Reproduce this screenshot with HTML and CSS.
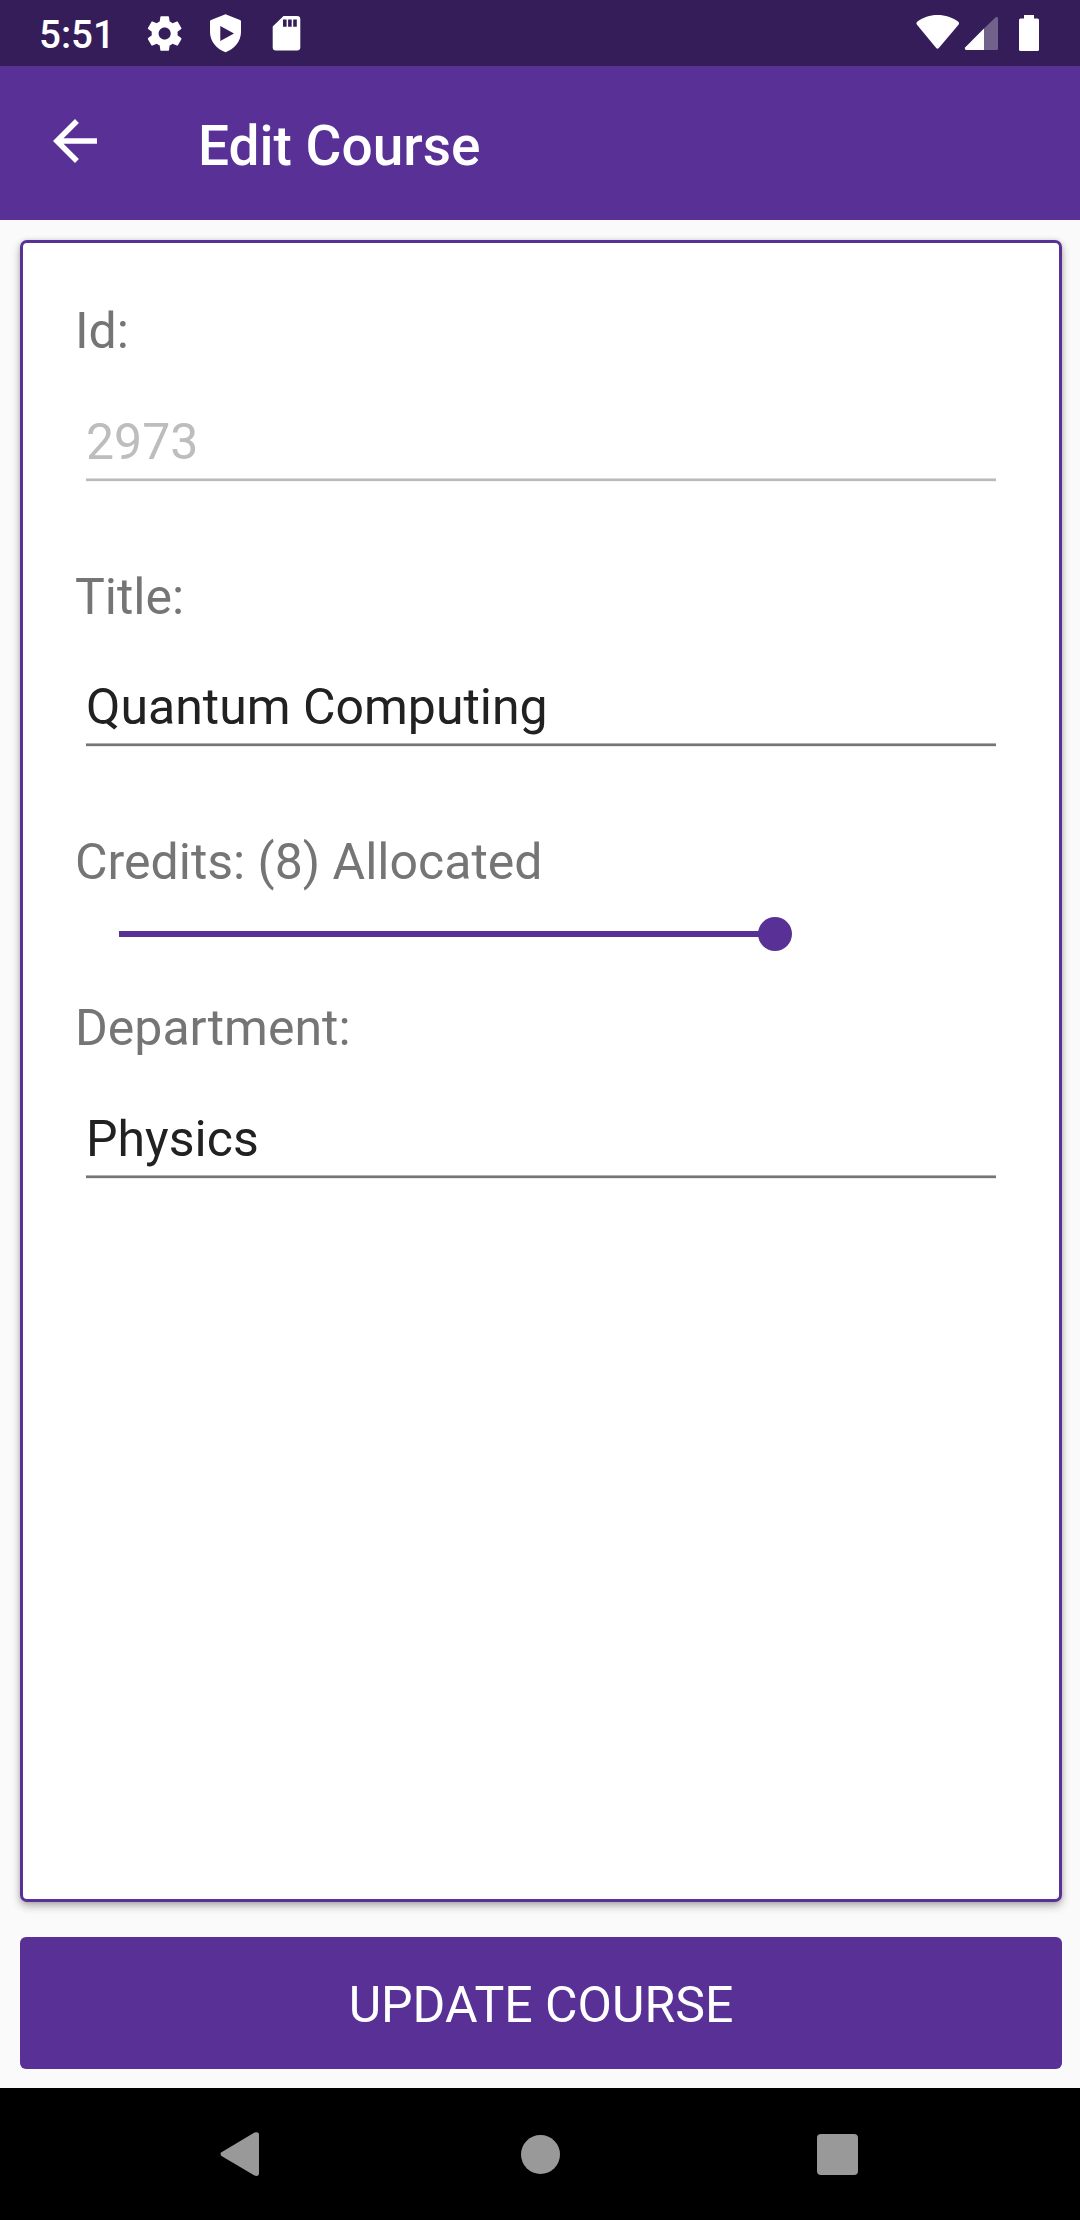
FILE: index.html
```html
<!DOCTYPE html>
<html lang="en">
<head>
<meta charset="utf-8">
<title>Edit Course</title>
<link rel="stylesheet" href="styles.css">
</head>
<body>
<div class="screen">
  <div class="status-bar">
    <span class="clock">5:51</span>
    <svg class="status-left" width="160" height="66" viewBox="144 0 160 66" fill="#fff">
      <path transform="translate(143.9 12.8) scale(1.73)" d="M19.43 12.98c.04-.32.07-.64.07-.98s-.03-.66-.07-.98l2.11-1.65c.19-.15.24-.42.12-.64l-2-3.46c-.12-.22-.39-.3-.61-.22l-2.49 1c-.52-.4-1.08-.73-1.69-.98l-.38-2.65C14.46 2.18 14.25 2 14 2h-4c-.25 0-.46.18-.49.42l-.38 2.65c-.61.25-1.17.59-1.69.98l-2.49-1c-.23-.09-.49 0-.61.22l-2 3.46c-.13.22-.07.49.12.64l2.11 1.65c-.04.32-.07.65-.07.98s.03.66.07.98l-2.11 1.65c-.19.15-.24.42-.12.64l2 3.46c.12.22.39.3.61.22l2.49-1c.52.4 1.08.73 1.69.98l.38 2.65c.03.24.24.42.49.42h4c.25 0 .46-.18.49-.42l.38-2.65c.61-.25 1.17-.59 1.69-.98l2.49 1c.23.09.49 0 .61-.22l2-3.46c.12-.22.07-.49-.12-.64l-2.11-1.65zM12 15.5c-1.93 0-3.5-1.57-3.5-3.5s1.57-3.5 3.5-3.5 3.5 1.57 3.5 3.5-1.57 3.5-3.5 3.5z"/>
      <path fill-rule="evenodd" d="M225.5 14.2 240 20q1 .4 1 1.5V32c0 9-6.3 17-15.5 20.3C216.300 49 210 41 210 32V21.500q0-1.100 1-1.500zM220.300 26v15l13.700-7.500z"/>
      <path fill-rule="evenodd" d="M283.500 16H297q3.300 0 3.300 3.300V47.300q0 3.300-3.300 3.300H276q-3.300 0-3.300-3.300V26.500zM283 19.500v7.300h3.600v-7.300zM288.100 19.500v7.300h3.600v-7.300zM293.200 19.500v7.300h3.600v-7.300z"/>
    </svg>
    <svg class="status-right" width="124" height="66" viewBox="916 0 124 66" fill="#fff">
      <path d="M937.500 15c8 0 14.800 2.400 20.500 6.500 1.200.9 1.400 2 .5 3.200L938.800 48q-1.300 1.300-2.600 0L917 24.700c-.9-1.200-.7-2.300.5-3.200C923 17.400 929.500 15 937.500 15z"/>
      <path fill-opacity=".3" d="M984 28.500 995.700 17.300q2.300-1 2.300 1.200V48.500q0 1.500-1.500 1.500H984z"/>
      <path d="M984 28.500V50H966.300q-2.300-.6-1-2.800z"/>
      <path d="M1024 15h10v3.500h3.500q1.500 0 1.500 1.500V49.500q0 1.500-1.500 1.500h-17q-1.500 0-1.500-1.500V20q0-1.500 1.500-1.500h3.500z"/>
    </svg>
  </div>
  <header class="app-bar">
    <svg class="back" width="66" height="66" viewBox="0 0 24 24" fill="#fff"><path d="M20 11H7.830l5.590-5.590L12 4l-8 8 8 8 1.410-1.410L7.830 13H20v-2z"/></svg>
    <h1 class="title">Edit Course</h1>
  </header>
  <main class="content">
    <section class="card">
      <div class="field">
        <div class="label">Id:</div>
        <div class="value disabled">2973</div>
      </div>
      <div class="field">
        <div class="label">Title:</div>
        <div class="value">Quantum Computing</div>
      </div>
      <div class="credits">
        <div class="label">Credits: (8) Allocated</div>
        <div class="slider"><div class="track"></div><div class="thumb"></div></div>
      </div>
      <div class="field">
        <div class="label">Department:</div>
        <div class="value">Physics</div>
      </div>
    </section>
    <div class="button">UPDATE COURSE</div>
  </main>
  <nav class="nav-bar">
    <svg width="40" height="46" viewBox="0 0 40 46"><path fill="#999" d="M1.500 21.300 34.500 1.600Q39 0 39 4V42Q39 46 34.500 44.600L1.500 24.900Q-.5 23.100 1.500 21.300z"/></svg>
    <div class="home"></div>
    <div class="recents"></div>
  </nav>
</div>
</body>
</html>
```

FILE: styles.css
```css
* { box-sizing: border-box; }

body {
  margin: 0;
  font-family: Roboto, "Liberation Sans", sans-serif;
}

.screen {
  display: flex;
  flex-direction: column;
  width: 1080px;
  height: 2220px;
  background: #fafafa;
}

.status-bar {
  display: flex;
  align-items: center;
  height: 66px;
  padding: 0 40px 0 39px;
  background: #351d5a;
  color: #fff;
}

.clock {
  width: 105px;
  padding-top: 3px;
  font-size: 38.5px;
  line-height: 46px;
  font-weight: 500;
}

.status-right { margin-left: auto; }

.app-bar {
  display: flex;
  height: 154px;
  padding: 42px 0 0 42px;
  gap: 90px;
  background: #593196;
  color: #fff;
}

.title {
  margin: 6px 0 0;
  font-size: 55px;
  line-height: 64px;
  font-weight: 500;
}

.content {
  flex: 1;
  display: flex;
  flex-direction: column;
  gap: 35px;
  padding: 20px 18px 19px 20px;
}

.card {
  flex: 1;
  padding: 59px 63px 0 52px;
  border: 3px solid #593196;
  border-radius: 7px;
  background: #fff;
  box-shadow: 0 4px 9px rgba(0, 0, 0, .3), 0 0 4px rgba(0, 0, 0, .12);
}

.label {
  font-size: 50px;
  line-height: 58px;
  color: #757575;
}

.field { height: 265.5px; }

.value {
  height: 69px;
  margin: 52.5px 0 0 11px;
  font-size: 50px;
  line-height: 58px;
  color: #212121;
  background: linear-gradient(#b0b0b0 0 1px, #757575 1px 3px, #e8e8e8 3px) bottom / 100% 4px no-repeat;
}

.value.disabled {
  color: #bdbdbd;
  background-image: linear-gradient(#dadada 0 1px, #bababa 1px 3px, #f6f6f6 3px);
}

.credits { height: 166px; }

.slider {
  display: flex;
  align-items: center;
  height: 34px;
  margin: 26px 0 0 44px;
}

.track {
  width: 642px;
  height: 6px;
  background: #593196;
}

.thumb {
  width: 34px;
  height: 34px;
  margin-left: -3px;
  border-radius: 50%;
  background: #593196;
}

.button {
  height: 132px;
  border-radius: 6px;
  background: #593196;
  color: #fff;
  font-size: 50px;
  line-height: 136px;
  text-align: center;
}

.nav-bar {
  display: flex;
  align-items: center;
  height: 132px;
  padding: 0 222px 0 220px;
  justify-content: space-between;
  background: #000;
}

.home {
  width: 39px;
  height: 39px;
  margin-left: 4px;
  border-radius: 50%;
  background: #999;
}

.recents {
  width: 41px;
  height: 41px;
  border-radius: 4px;
  background: #999;
}
```
